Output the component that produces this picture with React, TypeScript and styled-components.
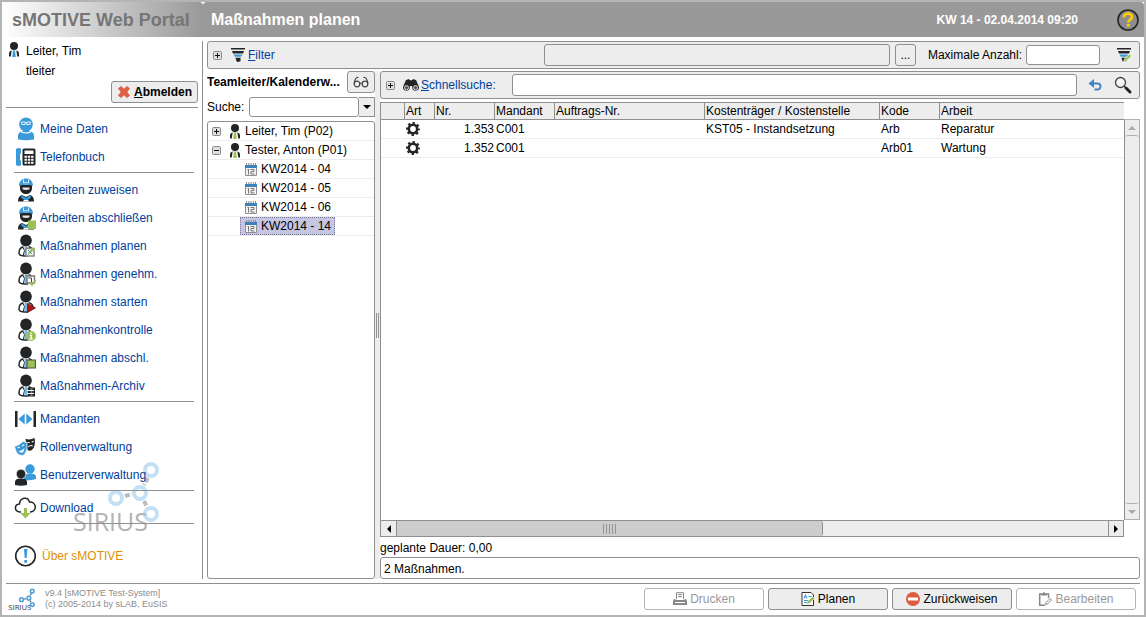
import React from 'react';
import styled, { createGlobalStyle, css } from 'styled-components';

const line = '#8f8f8f';
const panel = '#ededed';
const link = '#00409a';

const Global = createGlobalStyle`
  *, *::before, *::after { box-sizing: border-box; }
  html, body { margin: 0; }
  body, button, input, table {
    font-family: "Liberation Sans", Arial, sans-serif;
    font-size: 12px;
    line-height: 16px;
    color: #000;
  }
  svg { display: block; flex: none; }
`;

/* ---------- frame ---------- */

const Frame = styled.div`
  display: flex;
  flex-direction: column;
  min-height: 100vh;
  border: 2px solid #b4b4b4;
  background: #fff;
`;

const Header = styled.header`
  display: flex;
  height: 35px;
  color: #fff;
  font-weight: bold;
`;

const Brand = styled.div`
  display: flex;
  align-items: center;
  width: 201px;
  padding-left: 10px;
  border-radius: 0 4px 0 0;
  background: linear-gradient(to right, #fff, #999);
  color: #767676;
  font-size: 18px;
  white-space: nowrap;
`;

const TitleBar = styled.div`
  display: flex;
  flex: 1;
  align-items: center;
  padding: 0 5px 0 8px;
  border-radius: 4px 4px 0 0;
  background: #999;
`;

const Title = styled.h1`
  flex: 1;
  margin: 0;
  font-size: 16px;
`;

const Clock = styled.time`
  margin-right: 39px;
`;

const IconButton = styled.button`
  display: flex;
  align-items: center;
  justify-content: center;
  padding: 0;
  border: 0;
  background: none;
`;

const Body = styled.div`
  display: flex;
  flex: 1;
  padding: 4px 0;
`;

/* ---------- sidebar ---------- */

const Sidebar = styled.aside`
  position: relative;
  display: flex;
  flex-direction: column;
  width: 201px;
  border-right: 1px solid ${line};
`;

const User = styled.div`
  display: flex;
  gap: 6px;
  padding-left: 6px;
  line-height: 20px;
`;

const UserIcon = styled.div`
  padding-top: 1px;
`;

const UserFooter = styled.div`
  display: flex;
  justify-content: flex-end;
  margin: 0 4px;
  padding-bottom: 4px;
  border-bottom: 1px solid ${line};
`;

const Button = styled.button<{ $wide?: boolean; $bold?: boolean }>`
  display: flex;
  align-items: center;
  justify-content: center;
  gap: 3px;
  width: ${p => (p.$wide ? '120px' : 'auto')};
  height: 22px;
  padding: 0 5px;
  border: 1px solid ${line};
  border-radius: 3px;
  background: ${panel};
  font-weight: ${p => (p.$bold ? 'bold' : 'normal')};
  &:disabled {
    border-color: #b5b5b5;
    background: #fff;
    color: #999;
  }
`;

const Menu = styled.nav`
  position: relative;
  z-index: 1;
  padding: 7px 8px 0 12px;
`;

const MenuGroup = styled.ul`
  margin: 0 0 3px;
  padding: 0 0 1px;
  border-bottom: 1px solid ${line};
  list-style: none;
`;

const MenuLink = styled.a<{ $about?: boolean }>`
  display: flex;
  align-items: center;
  gap: ${p => (p.$about ? '6px' : '4px')};
  height: 28px;
  margin-top: ${p => (p.$about ? '18px' : '0')};
  color: ${p => (p.$about ? '#e09000' : link)};
  text-decoration: none;
  white-space: nowrap;
`;

const Watermark = styled.div`
  position: absolute;
  left: 70px;
  top: 420px;
`;

/* ---------- work area ---------- */

const Main = styled.main`
  display: flex;
  flex: 1;
  flex-direction: column;
  gap: 2px;
  min-width: 0;
  padding: 0 4px;
`;

const Bar = styled.div`
  display: flex;
  align-items: center;
  height: 28px;
  padding: 0 7px 0 5px;
  border: 1px solid ${line};
  border-radius: 3px;
  background: ${panel};
`;

const FilterStart = styled.div`
  display: flex;
  flex: 331 1 0;
  align-items: center;
`;

const BarLink = styled.a`
  display: flex;
  align-items: center;
  gap: 2px;
  margin-left: 8px;
  color: ${link};
  text-decoration: none;
`;

const Field = styled.input<{ $grow?: number }>`
  min-width: 0;
  height: 22px;
  padding: 0 4px;
  border: 1px solid ${line};
  border-radius: 3px;
  background: #fff;
  outline: none;
  ${p => p.$grow && css`flex: ${p.$grow} 1 0;`}
  &:read-only { background: ${panel}; }
`;

const SmallField = styled(Field)`
  width: 74px;
  height: 20px;
  margin: 0 16px 0 4px;
`;

const SquareButton = styled(Button)`
  width: 21px;
  margin: 0 12px 0 5px;
  padding: 0;
`;

const Split = styled.div`
  display: flex;
  flex: 1;
  min-height: 0;
`;

const LeftPane = styled.section`
  display: flex;
  flex-direction: column;
  width: 168px;
`;

const PaneHead = styled.div`
  display: flex;
  align-items: center;
  justify-content: space-between;
`;

const PaneTitle = styled.h2`
  width: 136px;
  margin: 0;
  overflow: hidden;
  font-size: 12px;
  white-space: nowrap;
`;

const GlassesButton = styled(Button)`
  width: 28px;
  padding: 0;
`;

const SearchRow = styled.div`
  display: flex;
  align-items: center;
  justify-content: space-between;
  margin: 4px 0;
`;

const Combo = styled.div`
  display: flex;
  width: 126px;
  height: 20px;
`;

const ComboInput = styled(Field)`
  flex: 1;
  height: 20px;
`;

const ComboButton = styled(IconButton)`
  width: 16px;
  border: 1px solid ${line};
  border-left: 0;
  background: ${panel};
`;

const Tree = styled.ul`
  flex: 1;
  margin: 0;
  padding: 0;
  border: 1px solid ${line};
  border-radius: 3px;
  list-style: none;
`;

const TreeRow = styled.li<{ $child?: boolean }>`
  display: flex;
  align-items: center;
  height: 19px;
  padding-left: ${p => (p.$child ? '32px' : '4px')};
  border-bottom: 1px solid #ececec;
  white-space: nowrap;
`;

const TreeLabel = styled.span<{ $selected?: boolean; $person?: boolean }>`
  display: flex;
  align-items: center;
  gap: 4px;
  height: 18px;
  margin-left: ${p => (p.$person ? '3px' : '0')};
  padding: 0 3px 0 4px;
  border: 1px dotted ${p => (p.$selected ? '#77779c' : 'transparent')};
  background: ${p => (p.$selected ? '#c6c6e2' : 'none')};
`;

const Splitter = styled.div`
  display: flex;
  align-items: center;
  justify-content: center;
  width: 5px;
  background: ${panel};
`;

const Grip = styled.div<{ $vertical?: boolean }>`
  width: ${p => (p.$vertical ? '3px' : '13px')};
  height: ${p => (p.$vertical ? '25px' : '10px')};
  background: repeating-linear-gradient(to right, #929292 0 1px, transparent 1px ${p => (p.$vertical ? '2px' : '3px')});
`;

const RightPane = styled.section`
  display: flex;
  flex: 1;
  flex-direction: column;
  min-width: 0;
`;

const QuickField = styled(Field)`
  flex: 1;
  margin: 0 11px 0 16px;
`;

const Tools = styled.div`
  display: flex;
  gap: 12px;
`;

const GridArea = styled.div`
  display: grid;
  flex: 1;
  grid-template: 1fr 17px / 1fr 16px;
  margin-top: 3px;
`;

const TableBox = styled.div`
  border: solid ${line};
  border-width: 1px 0 0 1px;
`;

const Table = styled.table`
  width: 100%;
  border-collapse: separate;
  border-spacing: 0;
  table-layout: fixed;
  white-space: nowrap;
  th, td {
    overflow: hidden;
    padding: 0 0 0 1px;
    font-weight: normal;
    text-align: left;
  }
  th {
    height: 17px;
    border-bottom: 1px solid ${line};
    background: ${panel};
  }
  th + th { border-left: 1px solid ${line}; }
  td {
    height: 19px;
    border-bottom: 1px solid #ececec;
    padding-left: 2px;
  }
  td.num { padding: 0; text-align: right; }
`;

const Col = styled.col<{ $w?: number }>`
  ${p => p.$w && css`width: ${p.$w}px;`}
`;

const VScroll = styled.div`
  display: flex;
  flex-direction: column;
  margin-top: 17px;
  border: solid #b0b0b0;
  border-width: 1px 1px 1px 0;
  border-left: 1px solid ${line};
  background: ${panel};
`;

const VTrack = styled.div`
  flex: 1;
  border: solid #b0b0b0;
  border-width: 1px 0;
  border-radius: 3px;
`;

const HScroll = styled.div`
  display: flex;
  border: 1px solid ${line};
  background: ${panel};
`;

const ScrollButton = styled(IconButton)<{ $edge: 'top' | 'bottom' | 'left' | 'right' }>`
  width: ${p => (p.$edge === 'left' || p.$edge === 'right' ? '15px' : '100%')};
  height: 15px;
  ${p => p.$edge === 'right' && css`border-left: 1px solid ${line};`}
`;

const Track = styled.div`
  flex: 1;
`;

const Thumb = styled.div`
  display: flex;
  align-items: center;
  justify-content: center;
  width: 60%;
  height: 100%;
  border: solid ${line};
  border-width: 0 1px;
  border-radius: 0 3px 3px 0;
  background: #cdcdcd;
`;

const Planned = styled.div`
  padding: 3px 0 1px;
`;

const Status = styled.output`
  height: 22px;
  padding: 3px 3px;
  border: 1px solid ${line};
  border-radius: 3px;
`;

/* ---------- footer ---------- */

const Footer = styled.footer`
  display: flex;
  height: 32px;
  margin: 0 4px;
  padding: 4px 4px 0 2px;
  border-top: 1px solid ${line};
`;

const Version = styled.p`
  flex: 1;
  margin: 0 0 0 10px;
  color: #8c8c8c;
  font-size: 9px;
  line-height: 11px;
`;

const Actions = styled.div`
  display: flex;
  gap: 4px;
`;

/* ---------- icons ---------- */

const dark = '#222426';
const blue = '#3b9ad9';
const green = '#9cc053';

const PlusBox = ({ minus = false }: { minus?: boolean }) => (
  <svg width="9" height="9" viewBox="0 0 9 9">
    <rect x=".5" y=".5" width="8" height="8" rx="1" fill="#dedede" stroke="#8a8a8a" />
    <path d={minus ? 'M2 4.500h5' : 'M2 4.500h5M4.500 2v5'} stroke="#111" />
  </svg>
);

const Funnel = ({ edit = false }: { edit?: boolean }) => (
  <svg width="16" height="16" viewBox="0 0 16 16">
    <path d="M1 1h14v1.500H1z M2 4h12l-1 2.500H3z" fill={dark} />
    <path d="M3.500 7.500h9l-1.300 2.300H4.800z" fill={blue} />
    <path d="M5.500 10.800h5v3.500l-3 .7-1-.7z" fill={dark} />
    {edit && <path d="M7.500 15l1-3 5-5 2 2-5 5z" fill={green} stroke="#fff" strokeWidth=".7" />}
  </svg>
);

const Person = ({ tie, size = 15 }: { tie: string; size?: number }) => (
  <svg width="12" height={size} viewBox="0 0 12 15">
    <circle cx="6" cy="4" r="4" fill={dark} />
    <path d="M1 14.500v-3c0-2 1.500-3 3-3h4c1.500 0 3 1 3 3v3z" fill={dark} />
    <path d="M3.700 8.300h4.600l1 6.700H2.700z" fill="#fff" />
    <path d="M5 8.500h2L7.800 15H4.200z" fill={tie} />
  </svg>
);

const Cross = () => (
  <svg width="14" height="14" viewBox="0 0 14 14">
    <path d="M4 1l3 2.800L10 1l3 2.500L10.300 7 13 10.500 10 13l-3-2.800L4 13l-3-2.500L3.700 7 1 3.500z" fill="#dc6043" />
  </svg>
);

const Arrow = ({ dir, color = '#000' }: { dir: 'up' | 'down' | 'left' | 'right'; color?: string }) => {
  const d = { up: 'M0 6h8L4 2z', down: 'M0 2h8L4 6z', left: 'M6 0v8L2 4z', right: 'M2 0v8l4-4z' }[dir];
  return <svg width="8" height="8" viewBox="0 0 8 8"><path d={d} fill={color} /></svg>;
};

const Calendar = () => (
  <svg width="12" height="13" viewBox="0 0 12 13">
    <path d="M1.500 0v3M3.800 0v3M6 0v3M8.300 0v3M10.500 0v3" stroke="#8a8a8a" />
    <path d="M0 2h12v3.500H0z" fill="#3c82bd" />
    <path d="M.5 5v7.500h11V5" fill="#f3f3f3" stroke="#8f8f8f" />
    <path d="M3.500 6v5.500M2.500 6.500h1M5.500 6.500h3.500v2H6v2.500h3.500" fill="none" stroke="#777" />
  </svg>
);

const Gear = () => (
  <svg width="14" height="14" viewBox="0 0 14 14">
    <circle cx="7" cy="7" r="4.200" fill="none" stroke={dark} strokeWidth="2.600" />
    <circle cx="7" cy="7" r="5.900" fill="none" stroke={dark} strokeWidth="2.200" strokeDasharray="2.317 2.317" strokeDashoffset="1.158" />
  </svg>
);

const Glasses = () => (
  <svg width="16" height="12" viewBox="0 0 16 12" fill="none" stroke="#444" strokeWidth="1.200">
    <circle cx="4" cy="8" r="2.800" /><circle cx="12" cy="8" r="2.800" />
    <path d="M6.800 7.500q1.200-1 2.400 0M1.200 7.500C1.500 4 3 1 5.500 1.500M14.800 7.500C14.500 4 13 1 10.500 1.500" />
  </svg>
);

const Binoculars = () => (
  <svg width="16" height="14" viewBox="0 0 17 14">
    <path d="M3 2l3-1.500L7.500 2h2L11 .5 14 2l3 7a3.700 3.700 0 0 1-7 2L9.500 8h-2L7 11a3.700 3.700 0 0 1-7-2z" fill={dark} />
    <circle cx="3.700" cy="9.800" r="2.200" fill="#555" stroke="#ddd" /><circle cx="13.300" cy="9.800" r="2.200" fill="#555" stroke="#ddd" />
  </svg>
);

const Undo = () => (
  <svg width="14" height="12" viewBox="0 0 14 12">
    <path d="M3 4.500h6.500a2.700 2.700 0 0 1 0 6H6.500" fill="none" stroke="#4583c4" strokeWidth="2" />
    <path d="M6 0v9L.5 4.500z" fill="#4583c4" />
  </svg>
);

const Magnifier = () => (
  <svg width="18" height="18" viewBox="0 0 18 18">
    <circle cx="6.500" cy="6.500" r="5" fill="#f6f6f6" stroke="#444" strokeWidth="1.300" />
    <path d="M10 10l2 2" stroke="#444" strokeWidth="1.500" /><path d="M12 12l4 4" stroke={dark} strokeWidth="3" strokeLinecap="round" />
  </svg>
);

const Help = () => (
  <svg width="22" height="22" viewBox="0 0 22 22">
    <circle cx="11" cy="11" r="10" fill="#8c8c8c" stroke={dark} strokeWidth="1.600" />
    <path d="M7 8.500C7 3.500 15 3.500 15 8c0 2.700-3.700 2.500-3.700 5.500" fill="none" stroke="#fc0" strokeWidth="2.700" />
    <path d="M9.800 15h3v2.700h-3z" fill="#fc0" />
  </svg>
);

const Printer = () => (
  <svg width="14" height="14" viewBox="0 0 14 14">
    <path d="M3.500 7V.7h7V7M5 2.700h4M5 4.700h4" fill="none" stroke="#888" />
    <path d="M1 7h1.500v1h9V7H13l1 2v4H0V9z" fill="#888" /><path d="M2 10.500h10" stroke="#fff" />
  </svg>
);

const PlanSheet = () => (
  <svg width="14" height="14" viewBox="0 0 14 14">
    <path d="M1 .5h9l2.500 2.500v10.500H1z" fill="#fff" stroke="#333" />
    <path d="M3 6.500l1.500-4 1.500 4M3.500 5h2M7.500 4.500h3M3 8.500h7M3 10.500h4" fill="none" stroke={blue} />
    <path d="M5.500 12.500l1-3 5-5 2 2-5 5z" fill={green} stroke="#fff" strokeWidth=".6" />
  </svg>
);

const NoEntry = () => (
  <svg width="14" height="14" viewBox="0 0 14 14"><circle cx="7" cy="7" r="7" fill="#dc5c3e" /><path d="M2 5.500h10v3H2z" fill="#fff" /></svg>
);

const Clipboard = () => (
  <svg width="14" height="14" viewBox="0 0 14 14" fill="none" stroke="#888">
    <path d="M3 2H1.700v11.300H7M9 2h1.500v4" strokeWidth="1.500" /><path d="M3.500 3V1.500h1.200L6 .5l1.200 1h1.300V3z" fill="#888" />
    <path d="M7.500 12.500l.5-2 4-4 1.500 1.500-4 4z" />
  </svg>
);

type Badge = 'plan' | 'approve' | 'start' | 'info' | 'done' | 'archive';

const Manager = ({ badge }: { badge: Badge }) => (
  <svg width="22" height="24" viewBox="0 0 22 24">
    <ellipse cx="12" cy="6.500" rx="5.800" ry="6" fill={dark} />
    <path d="M9.500 12.800C6 13.500 5 16 5 19c0 2 2 3 6 3h3M14.500 12.800c3 .7 4.500 2.700 4.500 5.200" fill="none" stroke={dark} strokeWidth="1.500" />
    <path d="M9 13.500l1.500 3-1.200 5" fill="none" stroke={dark} />
    <path d="M10.500 13h3l1.500 8.500h-4.500z" fill={blue} opacity=".7" />
    {badge === 'plan' && <><path d="M12 14.500h8v7.500h-8z" fill="#fff" stroke="#888" strokeWidth="1.500" /><path d="M13.500 21l1-3 4-4.500 2 1.500-4.500 5z" fill={green} /><path d="M14 16l4 4" stroke={blue} /></>}
    {badge === 'approve' && <><path d="M13 14h7.500v7H13z" fill="#fff" stroke="#777" strokeWidth="1.400" /><path d="M14.500 16h3v4" fill="none" stroke="#444" /><path d="M16 20.500l2 2.500 4-5" fill="none" stroke={green} strokeWidth="1.800" /></>}
    {badge === 'start' && <path d="M13.500 13.500l8 4.500-8 4.500z" fill="#b11313" stroke="#5d0c0c" strokeWidth=".7" />}
    {badge === 'info' && <><circle cx="17" cy="18" r="5" fill={green} /><path d="M17 14.500v1.600M16 17.500h1.200v3.200M15.700 20.800h2.800" stroke="#fff" strokeWidth="1.400" fill="none" /></>}
    {badge === 'done' && <path d="M13 14h8.500v8H13z" fill={green} stroke="#555" strokeWidth="1.200" />}
    {badge === 'archive' && <><path d="M14 13.500h7V22.500h-7z" fill={dark} /><path d="M13 16.500h7M13 19.500h7" stroke="#fff" /><path d="M16.500 15h2M16.500 18h2M16.500 21h2" stroke="#bbb" /></>}
  </svg>
);

const Worker = ({ done = false }: { done?: boolean }) => (
  <svg width="22" height="24" viewBox="0 0 22 24">
    <path d="M6 7h12v3c0 4-3 6-6 6s-6-2-6-6z" fill={dark} />
    <path d="M8.500 9.500h7v1.700q-3.500 1.500-7 0z" fill="#e8e8e8" />
    <path d="M5 8C5 3 8 .5 12 .5s7 2.500 7 7.500q-7-2.500-14 0z" fill={blue} />
    <path d="M9.500 1.500v3.500M14.500 1.500v3.500M9.500 5q2.500-.8 5 0" fill="none" stroke="#d5ecfa" />
    <path d="M4 23.500c0-4 1.500-6 4-6.500l4 2 4-2c2.500.5 4 2.500 4 6.500z" fill={dark} />
    <path d="M7.500 17l4.500 3 4.500-3 .5 2.500-5 4-5-4z" fill={blue} /><path d="M9.500 22h5v1.500h-5z" fill="#fff" />
    {done && <path d="M14 14.500h8v8.500H14z" fill={green} />}
  </svg>
);

const MyData = () => (
  <svg width="22" height="24" viewBox="0 0 22 24">
    <ellipse cx="12" cy="7.500" rx="6.800" ry="7" fill={blue} />
    <path d="M4 22.500V19c0-3 2.500-5 5-5h6c2.500 0 5 2 5 5v3.500q-8 1.500-16 0z" fill={blue} />
    <path d="M6.500 14.500q5.500 3 11 0" fill="none" stroke="#fff" strokeWidth="1.200" />
    <path d="M7.500 5h3.700v2.500H8zM12.800 5h3.700L16 7.500h-3.200zM11 5.500h2" fill="none" stroke="#e2f2fc" />
  </svg>
);

const Phone = () => (
  <svg width="22" height="20" viewBox="0 0 22 20">
    <path d="M2 2l2-1 3 .5V6L6 7.500v5L7 14v4.500l-3 .5-2-1z" fill={blue} />
    <rect x="8.500" y="1.500" width="13" height="17" rx="1.500" fill={dark} />
    <path d="M10.500 3.500h9V7h-9z" fill="#fff" />
    <path d="M10.500 9.700h9M10.500 12.700h9M10.500 15.700h9" stroke="#fff" strokeWidth="2" strokeDasharray="2.400 .9" />
  </svg>
);

const Clients = () => (
  <svg width="22" height="18" viewBox="0 0 22 18">
    <path d="M1 1h2.500v16H1zM19.500 1H22v16h-2.500z" fill={dark} /><path d="M10.700 3.500v11L4.500 9zM12.300 3.500v11L18.500 9z" fill={blue} />
  </svg>
);

const Masks = () => (
  <svg width="22" height="20" viewBox="0 0 23 20">
    <path d="M12 1.500q5 1.500 9.500-1 1.500 8-2.500 12.500-3 2-5 0z" fill={dark} />
    <path d="M14 5l2.500.5M18.500 5l2-1M15 10q2-2.500 4.500-1" stroke="#fff" fill="none" strokeWidth="1.200" />
    <path d="M.5 9.500Q6 8 9.500 4l4 1.500q1.500 7-2.500 12.500-5 2.500-8.500-2.500z" fill={blue} stroke="#fff" strokeWidth=".8" />
    <path d="M3.500 11l2.500-1M8.500 9l2-1.500" stroke="#fff" fill="none" strokeWidth="1.100" />
    <path d="M5 14q3.500.5 6-3-.5 5-3.500 5Q6 16 5 14z" fill="#fff" />
  </svg>
);

const Users = () => (
  <svg width="22" height="22" viewBox="0 0 22 22">
    <circle cx="16" cy="5" r="4.700" fill={blue} /><path d="M10 16v-3c0-3 3-3.500 6-3.500s6 .5 6 3.500v2q-6 2-12 1z" fill={blue} />
    <circle cx="7" cy="10" r="4.800" fill={dark} stroke="#fff" strokeWidth=".7" />
    <path d="M1 21v-3c0-2.500 2.500-3.500 6-3.500s6 1 6 3.500v3q-6 1.500-12 0z" fill={dark} />
  </svg>
);

const CloudDownload = () => (
  <svg width="22" height="22" viewBox="0 0 22 22">
    <path d="M7 15H6C0 14.500 0 7.500 5.500 7 6 0 14-.5 15.500 5c7-.5 8 9 1 10H16" fill="none" stroke={dark} strokeWidth="1.500" />
    <path d="M10 11h3v5h3.700L11.500 21.500 6.300 16H10z" fill={green} />
  </svg>
);

const About = () => (
  <svg width="22" height="22" viewBox="0 0 22 22">
    <circle cx="11.500" cy="11" r="9.800" fill="#fff" stroke={dark} strokeWidth="1.600" />
    <path d="M10 4h3.400l-.7 9h-2zM10.300 15h2.800v2.700h-2.800z" fill={blue} />
  </svg>
);

const Sirius = ({ width, height, faded = false }: { width: number; height: number; faded?: boolean }) => (
  <svg width={width} height={height} viewBox="0 0 88 76">
    <g fill="none" stroke={faded ? '#c3e0f5' : '#4a9fdc'} strokeWidth={faded ? 4 : 5}>
      <circle cx="79" cy="9" r="6" /><circle cx="68" cy="32" r="6" /><circle cx="44" cy="37" r="6" /><circle cx="79" cy="53" r="6" />
    </g>
    <path d="M76 17l-4 7M53 35l7-2M72 40l3 6" stroke={faded ? '#bbb' : '#555'} strokeWidth="4" strokeDasharray="5 2" />
    <text x="1" y="70" fontFamily="Liberation Sans Narrow, Open Sans, sans-serif" fontSize="25" fill={faded ? '#b3b3b3' : '#333'}>SIRIUS</text>
  </svg>
);

/* ---------- data ---------- */

const menu: { label: string; icon: React.ReactNode }[][] = [
  [
    { label: 'Meine Daten', icon: <MyData /> },
    { label: 'Telefonbuch', icon: <Phone /> },
  ],
  [
    { label: 'Arbeiten zuweisen', icon: <Worker /> },
    { label: 'Arbeiten abschließen', icon: <Worker done /> },
    { label: 'Maßnahmen planen', icon: <Manager badge="plan" /> },
    { label: 'Maßnahmen genehm.', icon: <Manager badge="approve" /> },
    { label: 'Maßnahmen starten', icon: <Manager badge="start" /> },
    { label: 'Maßnahmenkontrolle', icon: <Manager badge="info" /> },
    { label: 'Maßnahmen abschl.', icon: <Manager badge="done" /> },
    { label: 'Maßnahmen-Archiv', icon: <Manager badge="archive" /> },
  ],
  [
    { label: 'Mandanten', icon: <Clients /> },
    { label: 'Rollenverwaltung', icon: <Masks /> },
    { label: 'Benutzerverwaltung', icon: <Users /> },
  ],
  [{ label: 'Download', icon: <CloudDownload /> }],
];

const people = [
  { name: 'Leiter, Tim (P02)', open: false },
  { name: 'Tester, Anton (P01)', open: true },
];
const weeks = ['KW2014 - 04', 'KW2014 - 05', 'KW2014 - 06', 'KW2014 - 14'];

const columns: { title: string; width?: number }[] = [
  { title: '', width: 23 },
  { title: 'Art', width: 30 },
  { title: 'Nr.', width: 60 },
  { title: 'Mandant', width: 60 },
  { title: 'Auftrags-Nr.', width: 150 },
  { title: 'Kostenträger / Kostenstelle', width: 175 },
  { title: 'Kode', width: 60 },
  { title: 'Arbeit' },
];

const rows = [
  { nr: '1.353', client: 'C001', order: '', cost: 'KST05 - Instandsetzung', code: 'Arb', work: 'Reparatur' },
  { nr: '1.352', client: 'C001', order: '', cost: '', code: 'Arb01', work: 'Wartung' },
];

export default function App() {
  return (
    <Frame>
      <Global />
      <Header>
        <Brand>sMOTIVE Web Portal</Brand>
        <TitleBar>
          <Title>Maßnahmen planen</Title>
          <Clock dateTime="2014-04-02T09:20">KW 14 - 02.04.2014 09:20</Clock>
          <IconButton aria-label="Hilfe"><Help /></IconButton>
        </TitleBar>
      </Header>

      <Body>
        <Sidebar>
          <User>
            <UserIcon><Person tie={blue} /></UserIcon>
            <div>Leiter, Tim<br />tleiter</div>
          </User>
          <UserFooter>
            <Button $bold><Cross /><span><u>A</u>bmelden</span></Button>
          </UserFooter>
          <Watermark><Sirius width={88} height={76} faded /></Watermark>
          <Menu>
            {menu.map((group, i) => (
              <MenuGroup key={i}>
                {group.map(item => (
                  <li key={item.label}><MenuLink href="#">{item.icon}{item.label}</MenuLink></li>
                ))}
              </MenuGroup>
            ))}
            <MenuLink href="#" $about><About />Über sMOTIVE</MenuLink>
          </Menu>
        </Sidebar>

        <Main>
          <Bar>
            <FilterStart>
              <IconButton aria-label="Filter aufklappen"><PlusBox /></IconButton>
              <BarLink href="#"><Funnel /><span><u>F</u>ilter</span></BarLink>
            </FilterStart>
            <Field $grow={336} readOnly aria-label="Filter" />
            <SquareButton>...</SquareButton>
            <label htmlFor="max">Maximale Anzahl:</label>
            <SmallField id="max" />
            <IconButton aria-label="Filter bearbeiten"><Funnel edit /></IconButton>
          </Bar>

          <Split>
            <LeftPane>
              <PaneHead>
                <PaneTitle>Teamleiter/Kalenderw...</PaneTitle>
                <GlassesButton aria-label="Ansicht"><Glasses /></GlassesButton>
              </PaneHead>
              <SearchRow>
                <label htmlFor="search">Suche:</label>
                <Combo>
                  <ComboInput id="search" />
                  <ComboButton aria-label="Auswahl öffnen"><Arrow dir="down" /></ComboButton>
                </Combo>
              </SearchRow>
              <Tree>
                {people.map(p => (
                  <TreeRow key={p.name}>
                    <IconButton aria-label={p.name}><PlusBox minus={p.open} /></IconButton>
                    <TreeLabel $person><Person tie={green} size={15} />{p.name}</TreeLabel>
                  </TreeRow>
                ))}
                {weeks.map((w, i) => (
                  <TreeRow key={w} $child>
                    <TreeLabel $selected={i === 3}><Calendar />{w}</TreeLabel>
                  </TreeRow>
                ))}
              </Tree>
            </LeftPane>

            <Splitter><Grip $vertical /></Splitter>

            <RightPane>
              <Bar>
                <IconButton aria-label="Schnellsuche aufklappen"><PlusBox /></IconButton>
                <BarLink as="label" htmlFor="quick"><Binoculars /><span><u>S</u>chnellsuche:</span></BarLink>
                <QuickField id="quick" />
                <Tools>
                  <IconButton aria-label="Zurücksetzen"><Undo /></IconButton>
                  <IconButton aria-label="Suchen"><Magnifier /></IconButton>
                </Tools>
              </Bar>
              <GridArea>
                <TableBox>
                  <Table>
                    <colgroup>{columns.map(c => <Col key={c.title} $w={c.width} />)}</colgroup>
                    <thead>
                      <tr>{columns.map(c => <th key={c.title}>{c.title}</th>)}</tr>
                    </thead>
                    <tbody>
                      {rows.map(r => (
                        <tr key={r.nr}>
                          <td /><td><Gear /></td><td className="num">{r.nr}</td><td>{r.client}</td>
                          <td>{r.order}</td><td>{r.cost}</td><td>{r.code}</td><td>{r.work}</td>
                        </tr>
                      ))}
                    </tbody>
                  </Table>
                </TableBox>
                <VScroll>
                  <ScrollButton $edge="top" aria-label="Nach oben"><Arrow dir="up" color="#aaa" /></ScrollButton>
                  <VTrack />
                  <ScrollButton $edge="bottom" aria-label="Nach unten"><Arrow dir="down" color="#aaa" /></ScrollButton>
                </VScroll>
                <HScroll>
                  <ScrollButton $edge="left" aria-label="Nach links"><Arrow dir="left" /></ScrollButton>
                  <Track><Thumb><Grip /></Thumb></Track>
                  <ScrollButton $edge="right" aria-label="Nach rechts"><Arrow dir="right" /></ScrollButton>
                </HScroll>
              </GridArea>
              <Planned>geplante Dauer: 0,00</Planned>
              <Status>2 Maßnahmen.</Status>
            </RightPane>
          </Split>
        </Main>
      </Body>

      <Footer>
        <Sirius width={27} height={24} />
        <Version>v9.4 [sMOTIVE Test-System]<br />(c) 2005-2014 by sLAB, EuSIS</Version>
        <Actions>
          <Button $wide disabled><Printer />Drucken</Button>
          <Button $wide><PlanSheet />Planen</Button>
          <Button $wide><NoEntry />Zurückweisen</Button>
          <Button $wide disabled><Clipboard />Bearbeiten</Button>
        </Actions>
      </Footer>
    </Frame>
  );
}
